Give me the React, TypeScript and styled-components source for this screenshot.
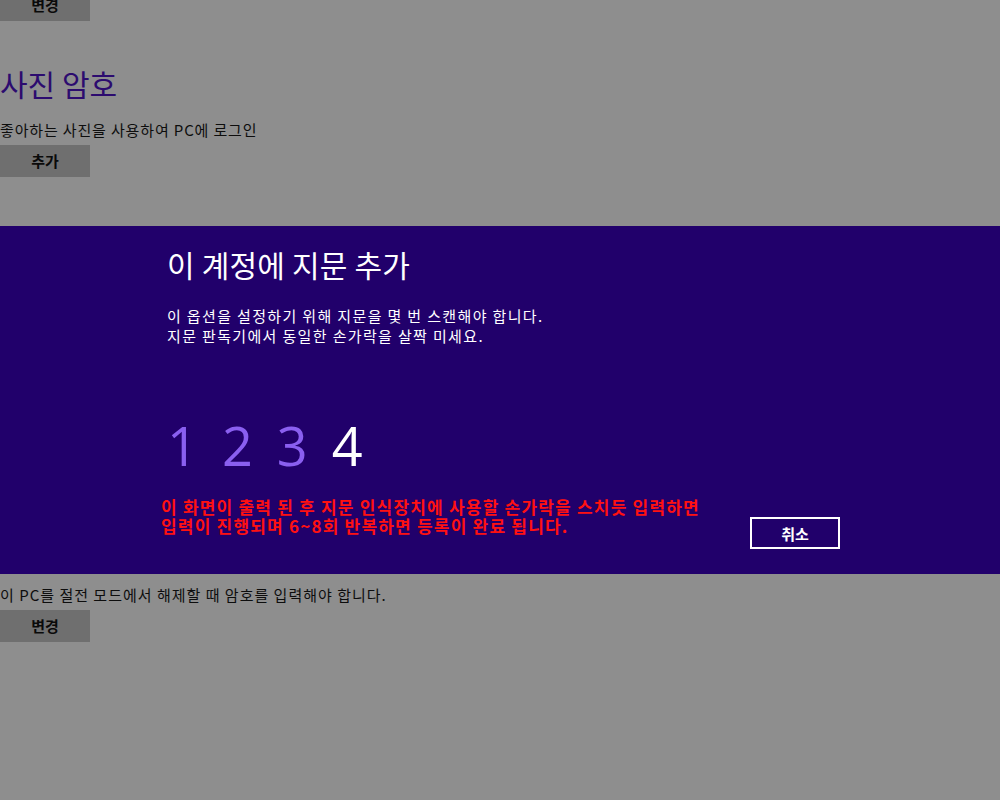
import React from "react";
import styled, { createGlobalStyle } from "styled-components";

const Global = createGlobalStyle`
  html, body {
    margin: 0;
    padding: 0;
    background: #8e8e8e;
    width: 1000px;
    height: 800px;
    overflow: hidden;
    font-family: "Noto Sans CJK KR", "Noto Sans", sans-serif;
  }
`;

const Page = styled.div`
  display: flex;
  flex-direction: column;
  align-items: flex-start;
  width: 1000px;
  height: 800px;
  background: #8e8e8e;
  color: #111;
`;

const GrayButton = styled.button<{ $top?: number }>`
  width: 90px;
  height: 32px;
  margin-top: ${(p) => p.$top ?? 0}px;
  border: none;
  padding: 0;
  background: #6f6f6f;
  color: #0a0a0a;
  font-family: "Noto Sans CJK KR", sans-serif;
  font-weight: 700;
  font-size: 15px;
  line-height: 32px;
  flex-shrink: 0;
`;

const Heading = styled.h2`
  margin: 42px 0 0 0;
  font-weight: 400;
  font-size: 30px;
  line-height: 40px;
  color: #2c0b6f;
`;

const Desc = styled.p<{ $top: number; $spacing: number }>`
  margin: ${(p) => p.$top}px 0 0 0;
  font-size: 15px;
  line-height: 20px;
  letter-spacing: ${(p) => p.$spacing}px;
  color: #0d0d0d;
`;

const Dialog = styled.section`
  margin-top: 49px;
  align-self: stretch;
  height: 348px;
  box-sizing: border-box;
  background: #21006b;
  padding: 18px 160px 25px 167px;
  display: flex;
  flex-direction: column;
  color: #fff;
`;

const DialogTitle = styled.h1`
  margin: 0;
  font-weight: 400;
  font-size: 30px;
  line-height: 40px;
  color: #fff;
  letter-spacing: 0.2px;
`;

const DialogText = styled.p`
  margin: 22px 0 0 0;
  font-size: 15px;
  line-height: 20px;
  letter-spacing: 1.35px;
  color: #fff;
`;

const Digits = styled.div`
  margin-top: 69px;
  display: flex;
  gap: 24px;
  font-family: "Open Sans", "Noto Sans", sans-serif;
  font-weight: 400;
  font-size: 54px;
  line-height: 60px;
`;

const Digit = styled.span<{ $active?: boolean }>`
  color: ${(p) => (p.$active ? "#ffffff" : "#8a5ff0")};
`;

const BottomRow = styled.div`
  margin-top: auto;
  display: flex;
  justify-content: space-between;
  align-items: flex-end;
`;

const Warning = styled.p`
  margin: 0 0 14px -6px;
  color: #ff1111;
  font-weight: 700;
  font-size: 17px;
  line-height: 19px;
  letter-spacing: 1.2px;
`;

const CancelButton = styled.button`
  width: 90px;
  height: 32px;
  box-sizing: border-box;
  border: 2px solid #fff;
  background: transparent;
  color: #fff;
  font-family: "Noto Sans CJK KR", sans-serif;
  font-weight: 700;
  font-size: 15px;
  padding: 0;
  flex-shrink: 0;
`;

export default function App() {
  return (
    <>
      <Global />
      <Page>
        <GrayButton $top={-11}>변경</GrayButton>
        <Heading>사진 암호</Heading>
        <Desc $top={17} $spacing={0.85}>좋아하는 사진을 사용하여 PC에 로그인</Desc>
        <GrayButton $top={5}>추가</GrayButton>
        <Dialog>
          <DialogTitle>이 계정에 지문 추가</DialogTitle>
          <DialogText>
            이 옵션을 설정하기 위해 지문을 몇 번 스캔해야 합니다.
            <br />
            지문 판독기에서 동일한 손가락을 살짝 미세요.
          </DialogText>
          <Digits>
            <Digit>1</Digit>
            <Digit>2</Digit>
            <Digit>3</Digit>
            <Digit $active>4</Digit>
          </Digits>
          <BottomRow>
            <Warning>
              이 화면이 출력 된 후 지문 인식장치에 사용할 손가락을 스치듯 입력하면
              <br />
              입력이 진행되며 6~8회 반복하면 등록이 완료 됩니다.
            </Warning>
            <CancelButton>취소</CancelButton>
          </BottomRow>
        </Dialog>
        <Desc $top={11} $spacing={1}>
          이 PC를 절전 모드에서 해제할 때 암호를 입력해야 합니다.
        </Desc>
        <GrayButton $top={5}>변경</GrayButton>
      </Page>
    </>
  );
}
